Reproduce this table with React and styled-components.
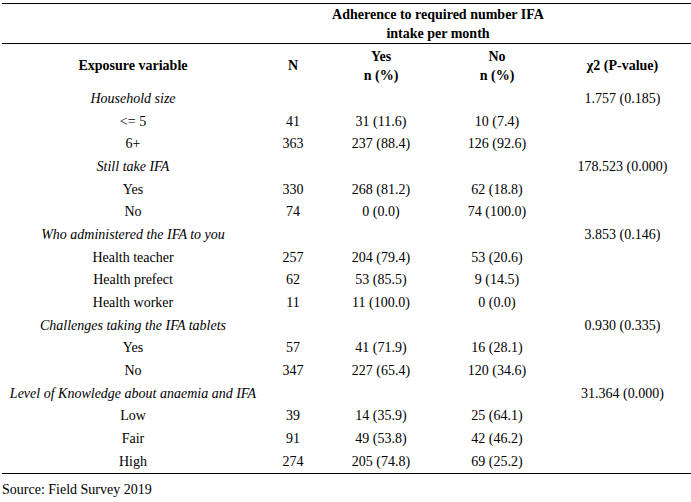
import React from 'react';
import styled, { createGlobalStyle } from 'styled-components';

const GlobalStyle = createGlobalStyle`
  html, body {
    margin: 0;
    padding: 0;
    background: #fff;
  }
  body {
    padding: 3px 0 0 2px;
    font-family: "Liberation Serif", "Times New Roman", serif;
    font-size: 14px;
    color: #000;
  }
`;

const groups = [
    {
        label: 'Household size',
        chi: '1.757 (0.185)',
        rows: [
            ['<= 5', '41', '31 (11.6)', '10 (7.4)'],
            ['6+', '363', '237 (88.4)', '126 (92.6)'],
        ],
    },
    {
        label: 'Still take IFA',
        chi: '178.523 (0.000)',
        rows: [
            ['Yes', '330', '268 (81.2)', '62 (18.8)'],
            ['No', '74', '0 (0.0)', '74 (100.0)'],
        ],
    },
    {
        label: 'Who administered the IFA to you',
        chi: '3.853 (0.146)',
        rows: [
            ['Health teacher', '257', '204 (79.4)', '53 (20.6)'],
            ['Health prefect', '62', '53 (85.5)', '9 (14.5)'],
            ['Health worker', '11', '11 (100.0)', '0 (0.0)'],
        ],
    },
    {
        label: 'Challenges taking the IFA tablets',
        chi: '0.930 (0.335)',
        rows: [
            ['Yes', '57', '41 (71.9)', '16 (28.1)'],
            ['No', '347', '227 (65.4)', '120 (34.6)'],
        ],
    },
    {
        label: 'Level of Knowledge about anaemia and IFA',
        chi: '31.364 (0.000)',
        rows: [
            ['Low', '39', '14 (35.9)', '25 (64.1)'],
            ['Fair', '91', '49 (53.8)', '42 (46.2)'],
            ['High', '274', '205 (74.8)', '69 (25.2)'],
        ],
    },
];

function App() {
    return (
        <>
            <GlobalStyle />
            <Table>
                <colgroup>
                    <col style={{ width: 262 }} />
                    <col style={{ width: 58 }} />
                    <col style={{ width: 118 }} />
                    <col style={{ width: 114 }} />
                    <col style={{ width: 137 }} />
                </colgroup>
                <thead>
                    <TopHead>
                        <HeadCell />
                        <HeadCell />
                        <HeadCell colSpan={2}>
                            Adherence to required number IFA
                            <br />
                            intake per month
                        </HeadCell>
                        <HeadCell />
                    </TopHead>
                    <SubHead>
                        <HeadCell>Exposure variable</HeadCell>
                        <HeadCell>N</HeadCell>
                        <HeadCell>
                            Yes
                            <br />n (%)
                        </HeadCell>
                        <HeadCell>
                            No
                            <br />n (%)
                        </HeadCell>
                        <HeadCell>χ2 (P-value)</HeadCell>
                    </SubHead>
                </thead>
                <tbody>
                    {groups.map((g) => (
                        <React.Fragment key={g.label}>
                            <Row>
                                <Cell $italic>{g.label}</Cell>
                                <Cell />
                                <Cell />
                                <Cell />
                                <Cell>{g.chi}</Cell>
                            </Row>
                            {g.rows.map((r, i) => (
                                <Row key={i}>
                                    {r.map((v, j) => (
                                        <Cell key={j}>{v}</Cell>
                                    ))}
                                    <Cell />
                                </Row>
                            ))}
                        </React.Fragment>
                    ))}
                </tbody>
            </Table>
            <Source>Source: Field Survey 2019</Source>
        </>
    );
}

const Table = styled.table`
    width: 689px;
    border-collapse: collapse;
    table-layout: fixed;
    border-top: 1px solid #000;
    border-bottom: 1px solid #000;
`;

const TopHead = styled.tr`
    height: 40px;
    border-bottom: 1px solid #000;
`;

const SubHead = styled.tr`
    height: 44px;
`;

const HeadCell = styled.th`
    padding: 0;
    font-weight: bold;
    text-align: center;
    vertical-align: middle;
    line-height: 19px;
`;

const Row = styled.tr`
    height: 22.7px;
`;

const Cell = styled.td`
    padding: 0;
    text-align: center;
    vertical-align: middle;
    white-space: nowrap;
    line-height: 16px;
    font-style: ${(p) => (p.$italic ? 'italic' : 'normal')};
`;

const Source = styled.div`
    margin-top: 8px;
`;

export default App;
